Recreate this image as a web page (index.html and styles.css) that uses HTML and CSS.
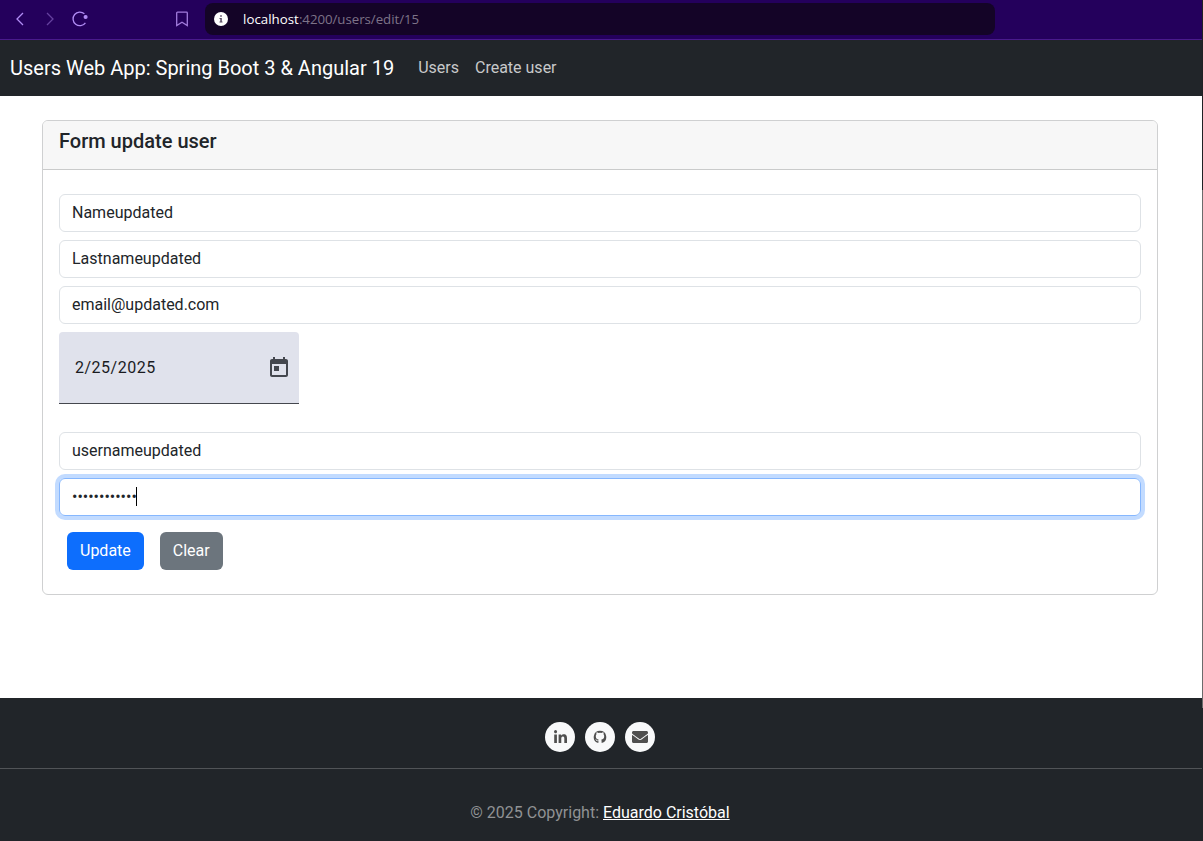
FILE: index.html
```html
<!DOCTYPE html>
<html lang="en">
<head>
<meta charset="utf-8">
<title>Users Web App</title>
<link rel="stylesheet" href="styles.css">
</head>
<body>
<div class="window">
  <div class="toolbar">
    <svg class="tool back" viewBox="0 0 16 16"><path d="M11 2 5 8l6 6"/></svg>
    <svg class="tool forward" viewBox="0 0 16 16"><path d="m5 2 6 6-6 6"/></svg>
    <svg class="tool reload" viewBox="0 0 16 16"><path d="M13.4 11.8A6.8 6.8 0 1 1 12.4 2.8"/><circle cx="13.6" cy="6" r="1.4"/></svg>
    <svg class="tool bookmark" viewBox="0 0 16 16"><path d="M3.500 1.200h9q.8 0 .8.8v12.600L8 11.300l-5.300 3.300V2q0-.8.8-.8z"/></svg>
    <div class="address">
      <svg class="info" viewBox="0 0 14 14"><circle cx="7" cy="7" r="7" fill="#fff"/><path d="M6.2 3.2h1.6v1.5H6.2zM5.5 6h2.3v3.4h.7v1.1h-3V9.400h.8V7.100h-.8z" fill="#54465f"/></svg>
      <span class="host">localhost</span><span class="path">:4200/users/edit/15</span>
    </div>
  </div>
  <nav class="navbar">
    <a class="brand">Users Web App: Spring Boot 3 &amp; Angular 19</a>
    <a class="nav-link">Users</a>
    <a class="nav-link">Create user</a>
  </nav>
  <main class="content">
    <section class="card">
      <header class="card-header"><h5 class="card-title">Form update user</h5></header>
      <form class="card-body">
        <div class="control">Nameupdated</div>
        <div class="control">Lastnameupdated</div>
        <div class="control">email@updated.com</div>
        <div class="date-field">
          <span>2/25/2025</span>
          <svg class="calendar" viewBox="0 0 24 24"><path d="M19 3h-1V1h-2v2H8V1H6v2H5c-1.11 0-1.99.9-1.99 2L3 19c0 1.1.89 2 2 2h14c1.1 0 2-.9 2-2V5c0-1.1-.9-2-2-2zm0 16H5V8h14v11zM7 10h5v5H7z"/></svg>
        </div>
        <div class="control">usernameupdated</div>
        <div class="control focused">••••••••••••<span class="caret"></span></div>
        <div class="actions">
          <button class="btn primary" type="button">Update</button>
          <button class="btn secondary" type="button">Clear</button>
        </div>
      </form>
    </section>
  </main>
  <footer class="footer">
    <div class="social">
      <a class="social-link"><svg viewBox="0 0 448 512" class="icon linkedin"><path d="M100.28 448H7.4V148.9h92.88zM53.79 108.1C24.09 108.1 0 83.5 0 53.8a53.79 53.79 0 0 1 107.58 0c0 29.7-24.1 54.3-53.79 54.3zM447.9 448h-92.68V302.4c0-34.7-.7-79.2-48.29-79.2-48.29 0-55.69 37.7-55.69 76.7V448h-92.78V148.9h89.08v40.8h1.3c12.4-23.5 42.69-48.3 87.88-48.3 94 0 111.28 61.9 111.28 142.3V448z"/></svg></a>
      <a class="social-link"><svg viewBox="0 0 16 16" class="icon github"><path fill-rule="evenodd" d="M8 .8a7.2 7.2 0 0 0-2.8 13.8c.7.3 1 .1 1-.4v-1.5c-1.700.300-2.300-.300-2.700-1-.200-.400-.500-.700-.900-1 .700-.200 1.300.100 1.700.700.500.700 1.100.8 1.900.500.100-.500.200-.700.400-.900C4.700 10.700 3.200 9.800 3.200 7.100c0-1 .300-1.700.8-2.300-.200-.7-.2-1.500.1-2.200.8 0 1.500.3 2.200.8a7 7 0 0 1 3.400 0c.7-.5 1.400-.8 2.200-.8.3.7.3 1.500.1 2.200.500.600.8 1.300.8 2.300 0 2.700-1.500 3.600-3.400 3.900.300.300.4.8.4 1.400v1.800c0 .5.3.7 1 .4A7.200 7.200 0 0 0 8 .8z"/></svg></a>
      <a class="social-link"><svg viewBox="0 0 512 512" class="icon mail"><path d="M502.3 190.8c3.9-3.1 9.7-.2 9.7 4.7V400c0 26.5-21.5 48-48 48H48c-26.5 0-48-21.5-48-48V195.6c0-5 5.7-7.8 9.7-4.7 22.4 17.4 52.1 39.5 154.1 113.6 21.1 15.4 56.7 47.8 92.2 47.6 35.7.3 72-32.8 92.3-47.6 102-74.1 131.6-96.3 154-113.7zM256 320c23.2.4 56.6-29.2 73.4-41.4 132.7-96.3 142.8-104.7 173.4-128.700 5.800-4.500 9.200-11.500 9.200-18.900v-19c0-26.500-21.500-48-48-48H48c-26.500 0-48 21.500-48 48v19c0 7.400 3.400 14.300 9.200 18.900 30.600 23.900 40.700 32.400 173.400 128.700 16.800 12.200 50.200 41.800 73.400 41.400z"/></svg></a>
    </div>
    <p class="copyright">© 2025 Copyright: <a class="author">Eduardo Cristóbal</a></p>
  </footer>
</div>
<div class="window-edge"></div>
</body>
</html>
```

FILE: styles.css
```css
* { box-sizing: border-box; }
body {
  margin: 0;
  height: 841px;
  display: flex;
  overflow: hidden;
  background: #fff;
  color: #212529;
  font: 16px/24px Roboto, sans-serif;
}
.window { flex: 1; display: flex; flex-direction: column; }
.window-edge {
  width: 1px;
  background: linear-gradient(#202124 190px, #6b6b6b 190px, #6b6b6b 708px, #212529 708px);
}

.toolbar {
  height: 40px;
  display: flex;
  align-items: center;
  padding: 0 0 2px 12px;
  background: #24005c;
  border-bottom: 1px solid #491a8c;
}
.tool { width: 16px; height: 16px; margin-right: 14px; fill: none; stroke: #b18cf5; stroke-width: 1.3; }
.forward { stroke: #65419f; }
.reload circle { fill: #b18cf5; }
.reload { margin-right: 86px; }
.bookmark { margin-right: 15px; stroke: #a17bdc; }
.address {
  width: 790px;
  height: 32px;
  display: flex;
  align-items: center;
  padding-left: 9px;
  background: #140427;
  border-radius: 8px;
  font: 13.3px/20px "Open Sans", sans-serif;
}
.info { width: 14px; height: 14px; margin-right: 15px; }
.host { color: #fff; letter-spacing: 0.02px; }
.path { color: #7d7388; letter-spacing: -0.05px; }

.navbar { height: 56px; display: flex; align-items: center; padding-left: 10px; background: #212529; }
.brand { margin-right: 16px; color: #fff; font-size: 20px; line-height: 30px; }
.nav-link { padding: 0 8px; color: #c8c9ca; }

.content { flex: 1; padding: 24px 44px 0 42px; }
.card { height: 475px; border: 1px solid #cfd0d1; border-radius: 6px; }
.card-header { height: 49px; padding: 8px 16px; background: #f7f7f7; border-bottom: 1px solid #cacbcb; border-radius: 5px 5px 0 0; }
.card-title { margin: 0; font-size: 20px; line-height: 24px; font-weight: 500; }
.card-body { padding: 24px 16px; }
.control { height: 38px; margin-bottom: 8px; padding: 6px 12px; border: 1px solid #dee2e6; border-radius: 6px; }
.focused { display: flex; border-color: #86b7fe; box-shadow: 0 0 0 4px #c2dbff; }
.caret { width: 1px; height: 19px; margin-top: 2px; margin-left: -1px; background: #000; }
.date-field {
  width: 240px;
  height: 72px;
  display: flex;
  align-items: center;
  justify-content: space-between;
  margin-bottom: 28px;
  padding: 0 8px 0 16px;
  background: #e0e2ec;
  border-bottom: 1px solid #44474e;
  border-radius: 4px 4px 0 0;
  color: #1a1b1f;
  letter-spacing: 0.5px;
}
.calendar { width: 24px; height: 24px; fill: #44474e; }
.actions { display: flex; gap: 16px; padding: 8px; }
.btn { height: 38px; padding: 0 13px; border: 0; border-radius: 6px; color: #fff; font: 16px/24px Roboto, sans-serif; }
.primary { background: #0d6efd; }
.secondary { background: #6c757d; }

.footer { height: 143px; background: #212529; }
.social { height: 71px; display: flex; justify-content: center; gap: 10px; padding: 24px 2px 0 0; border-bottom: 1px solid #515457; }
.social-link { width: 30px; height: 30px; display: grid; place-items: center; background: #f8f9fa; border-radius: 50%; }
.icon { fill: #4f4f4f; }
.linkedin { width: 13px; height: 15px; margin-top: 1px; }
.github { width: 14px; height: 14px; }
.mail { width: 16px; height: 16px; }
.copyright { margin: 0; padding: 32px 2px 0 0; text-align: center; color: #909294; }
.author { color: #fff; text-decoration: underline; }
```
